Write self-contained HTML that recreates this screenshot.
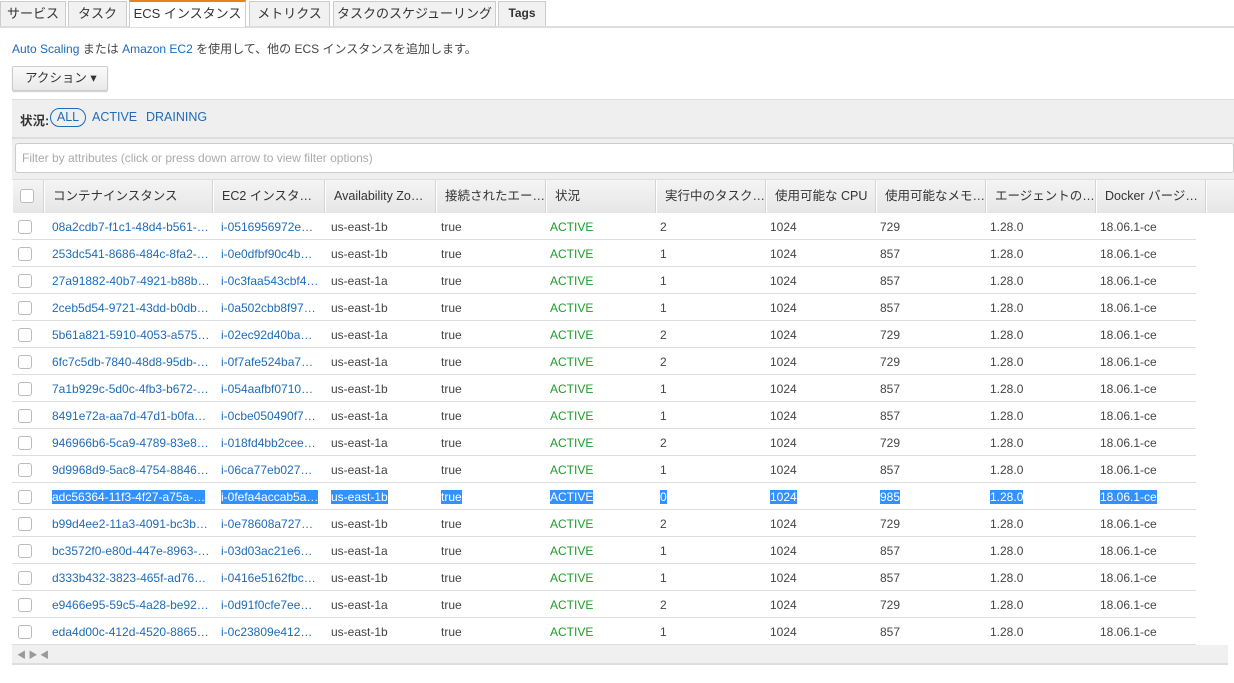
<!DOCTYPE html>
<html><head><meta charset="utf-8"><style>
*{box-sizing:border-box;margin:0;padding:0}
body{width:1234px;height:683px;background:#fff;font-family:"Liberation Sans","Noto Sans CJK JP",sans-serif;font-size:12px;color:#444;position:relative;overflow:hidden}
.a{position:absolute;white-space:nowrap}
.tab{position:absolute;top:1px;height:25px;background:#f1f1f1;border:1px solid #ccc;border-bottom:none;font-size:13px;color:#333;text-align:center;line-height:23px}
.tab.act{background:#fff;border-top:2px solid #e8821a;height:27px;top:0}
.lk{color:#1e6bb8}
.g{color:#1d9d2a}
.row{position:absolute;left:12px;width:1184px;height:27px;border-bottom:1px solid #ddd}
.cb{position:absolute;left:6px;top:7px;width:14px;height:14px;border:1px solid #bbb;border-radius:3px;background:#fff}
.c{position:absolute;top:7px;font-size:12px;white-space:nowrap}
.sel{background:#3390ff;color:#fff!important}
.h{position:absolute;top:180px;height:33px;border-left:1px solid #fff;border-right:1px solid #d4d4d4;font-size:12.5px;color:#333;line-height:33px;padding-left:8px;background:linear-gradient(#f4f4f4,#e6e6e6)}
</style></head><body>
<div class="a" style="left:0;top:26px;width:1234px;height:2px;background:#ddd"></div>
<div class="tab" style="left:0;width:66px">サービス</div>
<div class="tab" style="left:68px;width:59px">タスク</div>
<div class="tab act" style="left:129px;width:117px">ECS インスタンス</div>
<div class="tab" style="left:249px;width:81px">メトリクス</div>
<div class="tab" style="left:333px;width:163px">タスクのスケジューリング</div>
<div class="tab" style="left:498px;width:48px;font-weight:bold;font-size:12px">Tags</div>
<div class="a" style="left:12px;top:40px;font-size:12px"><span class="lk">Auto Scaling</span> または <span class="lk">Amazon EC2</span> を使用して、他の ECS インスタンスを追加します。</div>
<div class="a" style="left:12px;top:66px;width:96px;height:25px;border:1px solid #ccc;border-radius:2px;background:linear-gradient(#fafafa,#e9e9e9);font-size:12.5px;color:#333;line-height:23px;padding-left:12px;box-shadow:0 1px 1px #ccc">アクション ▾</div>
<div class="a" style="left:12px;top:99px;width:1222px;height:114px;background:#efefef;border-top:1px solid #ddd"></div>
<div class="a" style="left:12px;top:137px;width:1222px;height:2px;background:#ddd"></div>
<div class="a" style="left:20px;top:110px;font-size:12.5px;color:#333;font-weight:bold">状況:</div>
<div class="a lk" style="left:50px;top:108px;width:36px;height:19px;border:1.5px solid #1e6bb8;border-radius:10px;text-align:center;line-height:16px;font-size:12.5px">ALL</div>
<div class="a lk" style="left:92px;top:110px;font-size:12.5px">ACTIVE</div>
<div class="a lk" style="left:146px;top:110px;font-size:12.5px">DRAINING</div>
<div class="a" style="left:15px;top:143px;width:1219px;height:30px;background:#fff;border:1px solid #ccc;border-radius:3px;color:#aaa;font-size:12px;line-height:28px;padding-left:6px">Filter by attributes (click or press down arrow to view filter options)</div>
<div class="a" style="left:12px;top:179px;width:1222px;height:1px;background:#ddd"></div>
<div class="h" style="left:12px;width:32px"><div class="cb" style="left:7px;top:9px"></div></div>
<div class="h" style="left:44px;width:169px">コンテナインスタンス</div>
<div class="h" style="left:213px;width:112px">EC2 インスタ…</div>
<div class="h" style="left:325px;width:111px">Availability Zo…</div>
<div class="h" style="left:436px;width:110px">接続されたエー…</div>
<div class="h" style="left:546px;width:110px">状況</div>
<div class="h" style="left:656px;width:110px">実行中のタスク…</div>
<div class="h" style="left:766px;width:110px">使用可能な CPU</div>
<div class="h" style="left:876px;width:110px">使用可能なメモ…</div>
<div class="h" style="left:986px;width:110px">エージェントの…</div>
<div class="h" style="left:1096px;width:110px">Docker バージ…</div>
<div class="h" style="left:1206px;width:28px;border-right:none"></div>
<div id="rows"></div>
<div class="a" style="left:12px;top:645px;width:1216px;height:20px;background:#f0f0f0;border-bottom:2px solid #ddd;color:#999;font-size:9px;line-height:20px;padding-left:5px">◀ ▶ ◀</div>
<script>
var d=[["08a2cdb7-f1c1-48d4-b561-…","i-0516956972e…","us-east-1b",2,729],
["253dc541-8686-484c-8fa2-…","i-0e0dfbf90c4b…","us-east-1b",1,857],
["27a91882-40b7-4921-b88b…","i-0c3faa543cbf4…","us-east-1a",1,857],
["2ceb5d54-9721-43dd-b0db…","i-0a502cbb8f97…","us-east-1b",1,857],
["5b61a821-5910-4053-a575…","i-02ec92d40ba…","us-east-1a",2,729],
["6fc7c5db-7840-48d8-95db-…","i-0f7afe524ba7…","us-east-1a",2,729],
["7a1b929c-5d0c-4fb3-b672-…","i-054aafbf0710…","us-east-1b",1,857],
["8491e72a-aa7d-47d1-b0fa…","i-0cbe050490f7…","us-east-1a",1,857],
["946966b6-5ca9-4789-83e8…","i-018fd4bb2cee…","us-east-1a",2,729],
["9d9968d9-5ac8-4754-8846…","i-06ca77eb027…","us-east-1a",1,857],
["adc56364-11f3-4f27-a75a-…","i-0fefa4accab5a…","us-east-1b",0,985],
["b99d4ee2-11a3-4091-bc3b…","i-0e78608a727…","us-east-1b",2,729],
["bc3572f0-e80d-447e-8963-…","i-03d03ac21e6…","us-east-1a",1,857],
["d333b432-3823-465f-ad76…","i-0416e5162fbc…","us-east-1b",1,857],
["e9466e95-59c5-4a28-be92…","i-0d91f0cfe7ee…","us-east-1a",2,729],
["eda4d00c-412d-4520-8865…","i-0c23809e412…","us-east-1b",1,857]];
var h="";
d.forEach(function(r,i){var s=i==10?" sel":"";var t=213+i*27;
h+='<div class="row" style="top:'+t+'px"><div class="cb"></div>'+
'<span class="c lk'+s+'" style="left:40px">'+r[0]+'</span>'+
'<span class="c lk'+s+'" style="left:209px">'+r[1]+'</span>'+
'<span class="c'+s+'" style="left:319px">'+r[2]+'</span>'+
'<span class="c'+s+'" style="left:429px">true</span>'+
'<span class="c g'+s+'" style="left:538px">ACTIVE</span>'+
'<span class="c'+s+'" style="left:648px">'+r[3]+'</span>'+
'<span class="c'+s+'" style="left:758px">1024</span>'+
'<span class="c'+s+'" style="left:868px">'+r[4]+'</span>'+
'<span class="c'+s+'" style="left:978px">1.28.0</span>'+
'<span class="c'+s+'" style="left:1088px">18.06.1-ce</span></div>';});
document.getElementById("rows").innerHTML=h;
</script>
</body></html>
